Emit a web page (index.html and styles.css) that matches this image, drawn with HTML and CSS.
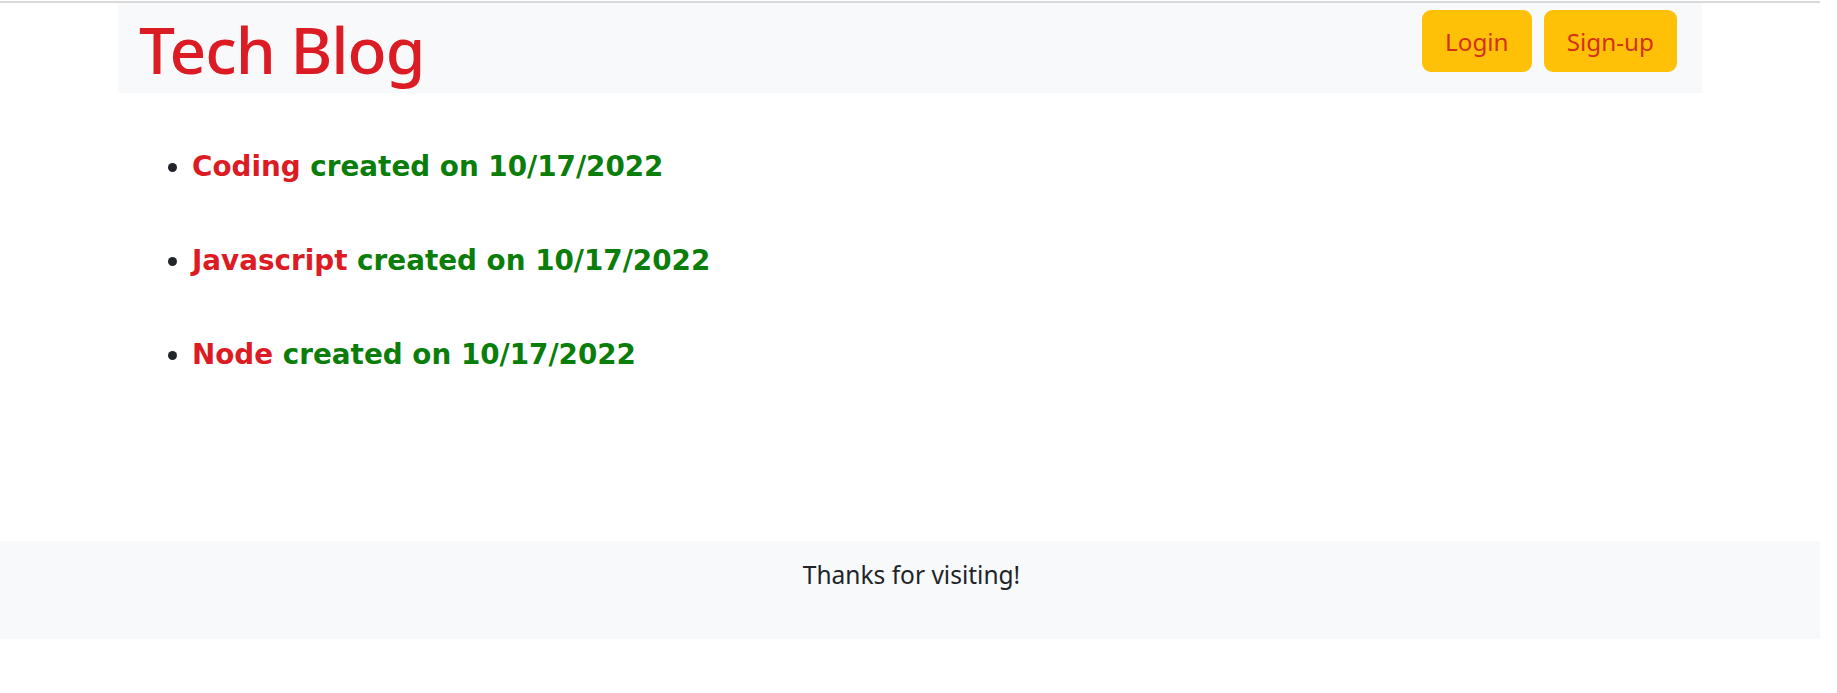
FILE: index.html
```html
<!DOCTYPE html>
<html lang="en">
<head>
<meta charset="utf-8">
<title>Tech Blog</title>
<link rel="stylesheet" href="styles.css">
</head>
<body>
<div class="topline"></div>
<header class="navbar">
  <h1 class="brand">Tech Blog</h1>
  <nav class="actions">
    <a class="btn" href="#">Login</a>
    <a class="btn" href="#">Sign-up</a>
  </nav>
</header>
<main class="content">
  <ul class="posts">
    <li><span class="title">Coding</span> <span class="meta">created on 10/17/2022</span></li>
    <li><span class="title">Javascript</span> <span class="meta">created on 10/17/2022</span></li>
    <li><span class="title">Node</span> <span class="meta">created on 10/17/2022</span></li>
  </ul>
</main>
<footer class="footer">
  <p>Thanks for visiting!</p>
</footer>
</body>
</html>
```

FILE: styles.css
```css
* { box-sizing: border-box; }
html, body { margin: 0; padding: 0; }
body {
  background: #fff;
  color: #212529;
  font-family: "Noto Sans", "Open Sans", sans-serif;
  padding-right: 17px;
}
.topline {
  height: 3px;
  border-top: 1px solid #fff;
  border-bottom: 2px solid #d9d9d9;
}
.navbar {
  width: 1584px;
  margin: 0 auto;
  height: 90px;
  background: #f8f9fa;
  display: flex;
  justify-content: space-between;
  align-items: flex-start;
  padding: 7px 25px 0 21px;
}
.brand {
  margin: 0;
  font-weight: 500;
  font-size: 64px;
  line-height: 80px;
  color: #dc1c24;
  letter-spacing: -1px;
}
.actions {
  display: flex;
  gap: 12px;
}
.btn {
  display: flex;
  align-items: center;
  justify-content: center;
  height: 62px;
  padding: 0 23px;
  background: #ffc107;
  border-radius: 9px;
  color: #d4311c;
  text-decoration: none;
  font-size: 24.3px;
}
.content {
  width: 1584px;
  margin: 0 auto;
  padding: 0 0 0 36px;
  height: 448px;
}
.posts {
  margin: 0;
  padding: 54px 0 0 38px;
  list-style: disc;
  font-family: "DejaVu Sans", Verdana, sans-serif;
}
.posts li {
  font-size: 27.8px;
  font-weight: 700;
  line-height: 40px;
  margin-bottom: 54px;
}
.posts .title { color: #dc1c24; }
.posts .meta { color: #0a7d0a; }
.footer {
  background: #f8f9fa;
  height: 98px;
  margin: 0;
  text-align: center;
  padding-top: 18px;
}
.footer p {
  margin: 0;
  font-size: 24.5px;
  line-height: 32px;
  padding-left: 3px;
}
```
